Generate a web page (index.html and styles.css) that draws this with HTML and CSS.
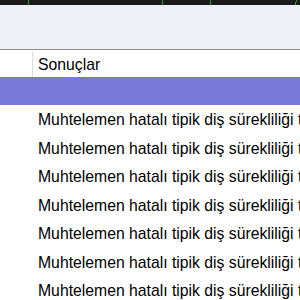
FILE: index.html
```html
<!DOCTYPE html>
<html lang="tr">
<head>
  <meta charset="UTF-8" />
  <title>Sonuçlar</title>
  <link rel="stylesheet" href="styles.css">
</head>
<body>
  <div class="topbar">
    <svg width="300" height="5" viewBox="0 0 300 5">
      <rect x="28" y="0" width="1" height="5" fill="#2b9a3c" />
      <rect x="162" y="0" width="1" height="5" fill="#2b9a3c" />
      <rect x="210" y="0" width="1" height="5" fill="#2b9a3c" />
      <rect x="296" y="0" width="1" height="2" fill="#2b9a3c" />
      <rect x="295" y="2" width="1" height="3" fill="#2b9a3c" />
    </svg>
  </div>
  <div class="toolbar"></div>

  <div class="table">
    <div class="row head">
      <div class="cell idx"></div>
      <div class="cell">Sonuçlar</div>
    </div>
    <div class="row selected">
      <div class="cell idx"></div>
      <div class="cell"></div>
    </div>
    <div class="row"><div class="cell idx"></div><div class="cell">Muhtelemen hatalı tipik diş sürekliliği tespit edildi</div></div>
    <div class="row"><div class="cell idx"></div><div class="cell">Muhtelemen hatalı tipik diş sürekliliği tespit edildi</div></div>
    <div class="row"><div class="cell idx"></div><div class="cell">Muhtelemen hatalı tipik diş sürekliliği tespit edildi</div></div>
    <div class="row"><div class="cell idx"></div><div class="cell">Muhtelemen hatalı tipik diş sürekliliği tespit edildi</div></div>
    <div class="row"><div class="cell idx"></div><div class="cell">Muhtelemen hatalı tipik diş sürekliliği tespit edildi</div></div>
    <div class="row"><div class="cell idx"></div><div class="cell">Muhtelemen hatalı tipik diş sürekliliği tespit edildi</div></div>
    <div class="row"><div class="cell idx"></div><div class="cell">Muhtelemen hatalı tipik diş sürekliliği tespit edildi</div></div>
  </div>
</body>
</html>
```

FILE: styles.css
```css
html, body {
  margin: 0;
  padding: 0;
  overflow: hidden;
  background: #fff;
}
body {
  font-family: "Liberation Sans", Arial, sans-serif;
  font-size: 15.75px;
  color: #000;
  width: 300px;
  height: 300px;
}
.topbar {
  height: 5px;
  background: #1b1b1b;
}
.topbar svg {
  display: block;
}
.toolbar {
  height: 44px;
  background: #eef2f7;
  border-bottom: 1px solid #8c8c8c;
}
.table {
  width: 300px;
}
.row {
  display: grid;
  grid-template-columns: 33px 1fr;
  height: 28.5px;
  line-height: 26.5px;
  padding-top: 2px;
  box-sizing: border-box;
}
.row.head {
  height: 27px;
  line-height: 27px;
  padding-top: 1px;
}
.row.head .idx {
  border-right: 1px solid #dcdcdc;
}
.row.selected {
  height: 28px;
  background: #7878d8;
}
.cell {
  white-space: nowrap;
  overflow: hidden;
  padding-left: 5px;
}
.cell.idx {
  padding-left: 0;
}
```
